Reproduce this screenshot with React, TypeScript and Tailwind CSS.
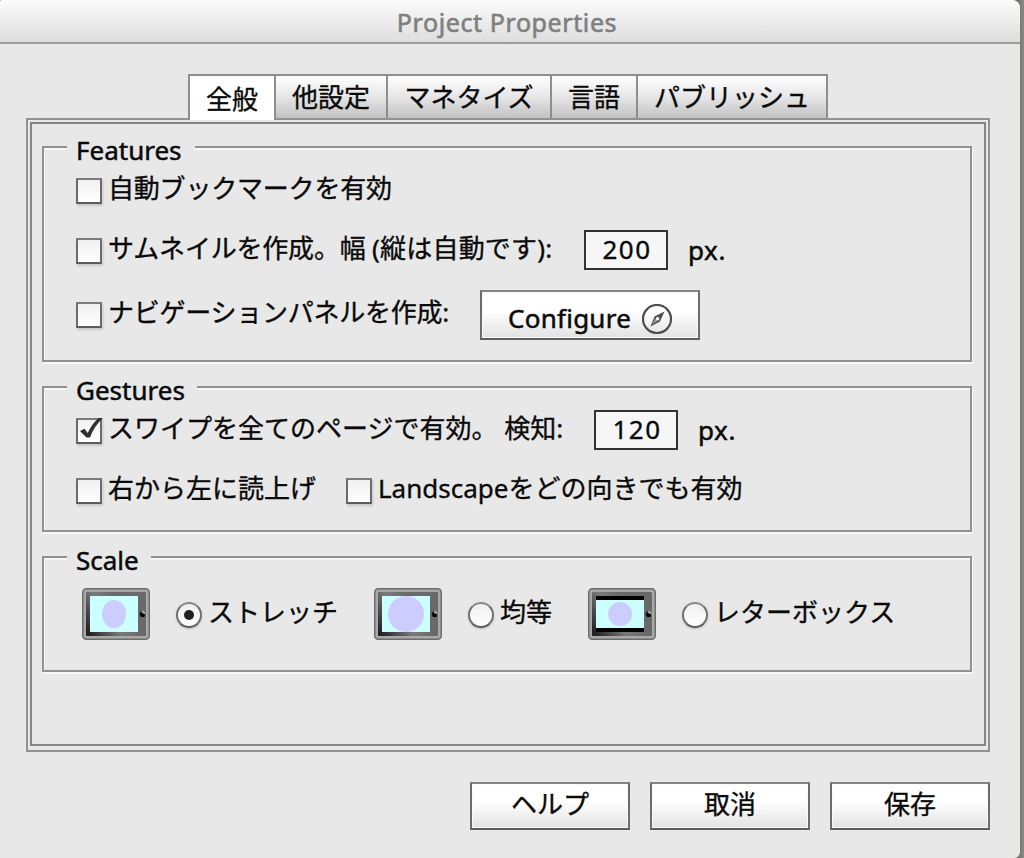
import type { ReactNode } from "react";

const FONT = "font-['Noto_Sans','Noto_Sans_CJK_JP',sans-serif]";

function Tab({ children, width }: { children: ReactNode; width: string }) {
  return (
    <button
      className={`${width} h-[44px] border-t-2 border-r-2 border-[#8e8e8e] bg-linear-to-b from-white via-[#e6e6e6] to-[#c2c2c2] pb-[2px] text-center leading-[42px] whitespace-nowrap`}
    >
      {children}
    </button>
  );
}

function Group({ title, className, legend, children }: { title: string; className: string; legend: string; children: ReactNode }) {
  return (
    <section
      className={`${className} w-[930px] shrink-0 border-2 border-[#919191] shadow-[1px_2px_0_#f7f7f7,inset_1px_2px_0_#f7f7f7]`}
    >
      <h2 className={`${legend} -mt-[14px] ml-[23px] h-[30px] bg-[#e8e8e8] pl-[9px] leading-[32px] whitespace-nowrap [-webkit-text-stroke:0.5px_#0a0a0a]`}>{title}</h2>
      {children}
    </section>
  );
}

function Check({ checked, children, textClass = "" }: { checked?: boolean; children: ReactNode; textClass?: string }) {
  return (
    <label className="flex h-[26px] items-center">
      <span className="flex size-[26px] shrink-0 border-2 border-t-[#7c7c7c] border-r-[#6c6c6c] border-b-[#5c5c5c] border-l-[#6c6c6c] bg-linear-to-b from-[#f0f0f0] to-white shadow-[1px_2px_2px_#c8c8c8]">
        {checked && (
          <svg viewBox="0 0 26 26" className="-m-[2px] size-[26px] shrink-0 overflow-visible">
            <path d="M4 13l4.500-2.200 3.200 4.200C14.500 9 18 4 22.500 0H27c-6 5.500-10 11.500-13 19.500h-3.500z" fill="#303030" />
          </svg>
        )}
      </span>
      <span className={`pb-[6px] pl-[6px] whitespace-nowrap ${textClass}`}>{children}</span>
    </label>
  );
}

function NumberBox({ value }: { value: string }) {
  return (
    <span className="h-[40px] w-[84px] shrink-0 border-2 border-[#333] bg-[#f6f6f6] pl-[2px] text-center leading-[34px] tracking-[1.5px]">
      {value}
    </span>
  );
}

function Radio({ checked, children, className }: { checked?: boolean; children: ReactNode; className: string }) {
  return (
    <label className={`${className} flex items-center`}>
      <span className="flex size-[26px] shrink-0 items-center justify-center rounded-full border-2 border-t-[#888] border-r-[#707070] border-b-[#5c5c5c] border-l-[#707070] bg-linear-to-b from-[#f0f0f0] to-white shadow-[0_1px_2px_#bbb]">
        {checked && <span className="size-[10px] rounded-full bg-[#222]" />}
      </span>
      <span className="pb-[6px] pl-[6px] whitespace-nowrap">{children}</span>
    </label>
  );
}

function Tablet({ mode, className }: { mode: "stretch" | "uniform" | "letterbox"; className: string }) {
  const id = `body-${mode}`;
  return (
    <svg viewBox="0 0 68 52" className={`${className} h-[52px] w-[68px] shrink-0 overflow-visible`}>
      <defs>
        <linearGradient id={id} x1="0" y1="0.850" x2="0.700" y2="0.500">
          <stop offset="0" stopColor="#222" />
          <stop offset="0.600" stopColor="#7a7a7a" />
          <stop offset="1" stopColor="#696969" />
        </linearGradient>
      </defs>
      <rect x="0.750" y="0.750" width="66.500" height="50.500" rx="3.500" fill="#a8a8a8" stroke="#6c6c6c" strokeWidth="1.500" />
      <rect x="4" y="4" width="60" height="44" rx="1" fill={`url(#${id})`} />
      <rect x="8" y="8" width="48" height="36" fill={mode === "letterbox" ? "#000" : "#ccffff"} />
      {mode === "letterbox" && <rect x="8" y="12" width="48" height="28" fill="#ccffff" />}
      {mode === "stretch" && <ellipse cx="32" cy="26" rx="12" ry="14" fill="#ccccff" />}
      {mode === "uniform" && <circle cx="32" cy="26" r="18" fill="#ccccff" />}
      {mode === "letterbox" && <circle cx="32" cy="26" r="12" fill="#ccccff" />}
      <path d="M59.500 22.500v3l3.500.5-.500 3h-3.500l-1.500-3z" fill="#000" />
      <path d="M60.500 23l2.500 2.500" fill="none" stroke="#bbb" strokeWidth="1.200" />
    </svg>
  );
}

function DialogButton({ children }: { children: ReactNode }) {
  return (
    <button className="h-[48px] w-[160px] border-2 border-t-[#858585] border-r-[#6c6c6c] border-b-[#5c5c5c] border-l-[#6c6c6c] bg-linear-to-b from-white from-40% to-[#e2e2e2] pb-[4px] text-center leading-[40px] shadow-[inset_0_0_0_1px_#fafafa]">
      {children}
    </button>
  );
}

export default function App() {
  return (
    <div className={`h-[858px] w-[1024px] overflow-hidden bg-linear-to-r from-[#6a6865] from-99% to-[#8a8884] ${FONT} text-[26px] leading-[30px] text-[#0a0a0a] [-webkit-text-stroke:0.35px]`}>
      <main className="flex h-[858px] w-[1020px] flex-col rounded-tl-[2px] rounded-tr-[8px] rounded-br-[6px] bg-[#e8e8e8]">
        <header className="h-[44px] shrink-0 rounded-tl-[2px] rounded-tr-[8px] border-b-2 border-[#9c9c9c] bg-linear-to-b from-[#fbfbfb] to-[#dedede] pr-[6px] text-center text-[25px] leading-[44px] tracking-[0.6px] text-[#7f7f7f] [-webkit-text-stroke:0.6px_#7f7f7f]">
          Project Properties
        </header>

        <nav className="z-10 mt-[30px] ml-[188px] flex h-[46px] shrink-0">
          <button className="h-[46px] w-[88px] border-t-2 border-r-2 border-l-2 border-[#8e8e8e] bg-white text-center leading-[46px]">全般</button>
          <Tab width="w-[112px]">他設定</Tab>
          <Tab width="w-[164px]">マネタイズ</Tab>
          <Tab width="w-[86px]">言語</Tab>
          <Tab width="w-[190px]">パブリッシュ</Tab>
        </nav>

        <div className="-mt-[2px] ml-[26px] h-[634px] w-[964px] shrink-0 border-2 border-[#919191] px-[2px] pt-[2px] pb-[4px]">
          <div className="flex h-full flex-col border-2 border-[#858585] pt-[22px] pl-[10px]">
            <Group title="Features" className="h-[216px]" legend="w-[128px]">
              <div className="mt-[14px] ml-[32px] flex h-[26px] items-center">
                <Check textClass="tracking-[-0.2px]">自動ブックマークを有効</Check>
              </div>
              <div className="mt-[26px] ml-[32px] flex h-[40px] items-center">
                <div className="w-[508px] pt-[2px]">
                  <Check textClass="tracking-[-0.2px]">
                    サムネイルを作成。幅 <span className="tracking-[0.2px]">(縦は自動です):</span>
                  </Check>
                </div>
                <NumberBox value="200" />
                <span className="pl-[20px] tracking-[0.6px] [-webkit-text-stroke:0.5px]">px.</span>
              </div>
              <div className="mt-[20px] ml-[32px] flex h-[50px] items-center">
                <div className="w-[404px]">
                  <Check textClass="tracking-[-0.25px]">ナビゲーションパネルを作成:</Check>
                </div>
                <button className="flex h-[50px] w-[220px] items-center border-2 border-t-[#858585] border-r-[#6c6c6c] border-b-[#5c5c5c] border-l-[#6c6c6c] bg-linear-to-b from-white from-40% to-[#e2e2e2] pl-[26px] shadow-[inset_0_0_0_1px_#fafafa]">
                  <span className="w-[134px] pt-[5px] text-left tracking-[0.25px] [-webkit-text-stroke:0.5px]">Configure</span>
                  <svg viewBox="0 0 30 30" className="mt-[8px] size-[30px] shrink-0">
                    <circle cx="15" cy="15" r="14" fill="none" stroke="#4d4d4d" strokeWidth="2.200" />
                    <path fillRule="evenodd" d="M22.500 7.500l-4.500 10-9.500 5 4-10zM15.500 13a1.800 1.800 0 1 0 .1 0z" fill="#4d4d4d" />
                    <path d="M10 20.500l3-6 2.500 2.500z" fill="#999" />
                  </svg>
                </button>
              </div>
            </Group>

            <Group title="Gestures" className="mt-[24px] h-[146px]" legend="w-[130px]">
              <div className="mt-[6px] ml-[32px] flex h-[40px] items-center">
                <div className="w-[518px] pt-[2px]">
                  <Check checked>スワイプを全てのページで有効。 検知:</Check>
                </div>
                <NumberBox value="120" />
                <span className="pl-[20px] tracking-[0.6px] [-webkit-text-stroke:0.5px]">px.</span>
              </div>
              <div className="mt-[28px] ml-[32px] flex h-[26px]">
                <div className="w-[270px]">
                  <Check>右から左に読上げ</Check>
                </div>
                <Check>Landscapeをどの向きでも有効</Check>
              </div>
            </Group>

            <Group title="Scale" className="mt-[24px] h-[116px]" legend="w-[84px]">
              <div className="mt-[14px] ml-[38px] flex h-[52px] items-center">
                <Tablet mode="stretch" className="" />
                <Radio checked className="ml-[26px] w-[172px] pt-[2px]">ストレッチ</Radio>
                <Tablet mode="uniform" className="ml-[26px]" />
                <Radio className="ml-[26px] w-[94px] pt-[2px]">均等</Radio>
                <Tablet mode="letterbox" className="ml-[26px]" />
                <Radio className="ml-[26px] pt-[2px]">レターボックス</Radio>
              </div>
            </Group>
          </div>
        </div>

        <footer className="mt-[30px] flex justify-end gap-[20px] pr-[30px]">
          <DialogButton>ヘルプ</DialogButton>
          <DialogButton>取消</DialogButton>
          <DialogButton>保存</DialogButton>
        </footer>
      </main>
    </div>
  );
}
